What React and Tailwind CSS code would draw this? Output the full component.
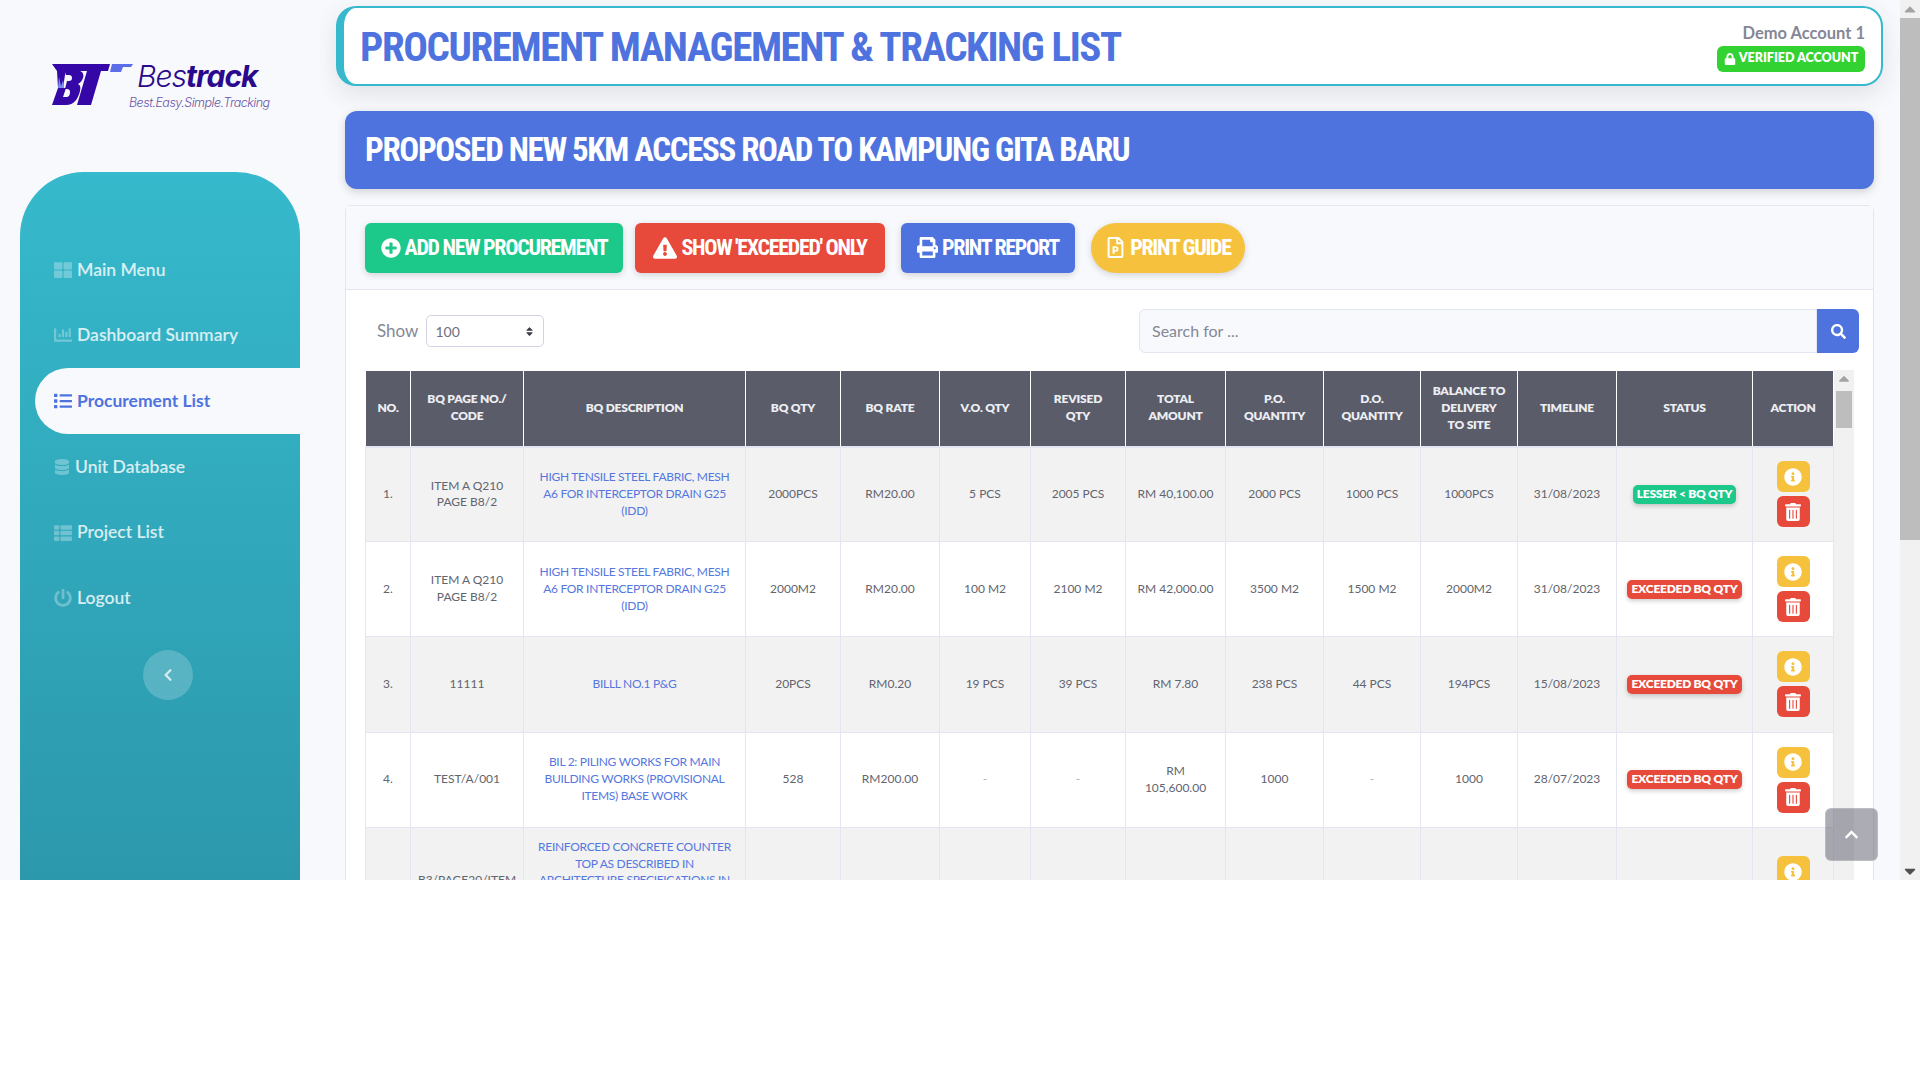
import { FaThLarge, FaChartBar, FaList, FaDatabase, FaThList, FaPowerOff, FaChevronLeft, FaChevronUp, FaLock, FaPlusCircle, FaExclamationTriangle, FaPrint, FaRegFilePowerpoint, FaSearch, FaInfoCircle, FaTrashAlt, FaSort, FaCaretUp, FaCaretDown } from 'react-icons/fa';

const menu = [
    { label: 'Main Menu', icon: FaThLarge },
    { label: 'Dashboard Summary', icon: FaChartBar },
    { label: 'Procurement List', icon: FaList, active: true },
    { label: 'Unit Database', icon: FaDatabase, tight: true },
    { label: 'Project List', icon: FaThList },
    { label: 'Logout', icon: FaPowerOff },
];

const columns = [
    { label: 'NO.', w: 'w-[45px]' },
    { label: 'BQ PAGE NO./\nCODE', w: 'w-[113px]' },
    { label: 'BQ DESCRIPTION', w: 'w-[222px]' },
    { label: 'BQ QTY', w: 'w-[95px]' },
    { label: 'BQ RATE', w: 'w-[99px]' },
    { label: 'V.O. QTY', w: 'w-[91px]' },
    { label: 'REVISED\nQTY', w: 'w-[95px]' },
    { label: 'TOTAL\nAMOUNT', w: 'w-[100px]' },
    { label: 'P.O.\nQUANTITY', w: 'w-[98px]' },
    { label: 'D.O.\nQUANTITY', w: 'w-[97px]' },
    { label: 'BALANCE TO\nDELIVERY\nTO SITE', w: 'w-[97px]' },
    { label: 'TIMELINE', w: 'w-[99px]' },
    { label: 'STATUS', w: 'w-[136px]' },
    { label: 'ACTION', w: 'w-[81px]' },
];

const rows = [
    ['1.', 'ITEM A Q210\nPAGE B8/2', 'HIGH TENSILE STEEL FABRIC, MESH\nA6 FOR INTERCEPTOR DRAIN G25\n(IDD)', '2000PCS', 'RM20.00', '5 PCS', '2005 PCS', 'RM 40,100.00', '2000 PCS', '1000 PCS', '1000PCS', '31/08/2023', 'LESSER < BQ QTY'],
    ['2.', 'ITEM A Q210\nPAGE B8/2', 'HIGH TENSILE STEEL FABRIC, MESH\nA6 FOR INTERCEPTOR DRAIN G25\n(IDD)', '2000M2', 'RM20.00', '100 M2', '2100 M2', 'RM 42,000.00', '3500 M2', '1500 M2', '2000M2', '31/08/2023', 'EXCEEDED BQ QTY'],
    ['3.', '11111', 'BILLL NO.1 P&G', '20PCS', 'RM0.20', '19 PCS', '39 PCS', 'RM 7.80', '238 PCS', '44 PCS', '194PCS', '15/08/2023', 'EXCEEDED BQ QTY'],
    ['4.', 'TEST/A/001', 'BIL 2: PILING WORKS FOR MAIN\nBUILDING WORKS (PROVISIONAL\nITEMS) BASE WORK', '528', 'RM200.00', '-', '-', 'RM\n105,600.00', '1000', '-', '1000', '28/07/2023', 'EXCEEDED BQ QTY'],
    ['', 'B3/PAGE20/ITEM\n4', 'REINFORCED CONCRETE COUNTER\nTOP AS DESCRIBED IN\nARCHITECTURE SPECIFICATIONS IN\nDRAWINGS AND AS INSTRUCTED\nBY THE SUPERINTENDING\nOFFICER', '', '', '', '', 'RM\n', '', '', '', '', ''],
];

const condensed = "font-['Roboto','Liberation_Sans',sans-serif] [font-stretch:75%]";

const Logo = () => (
    <div className="flex items-start pl-[32px] pt-[64px] h-[172px]">
        <svg width="81" height="41" viewBox="0 0 81 41" className="shrink-0">
            <path fill="#3407a6" d="M0 0H58L56 7H49L39 41H25L35 7H28C31 8 32 11 31 14C30 17 28 19 26 20C28 21 29 23 28 27C26 35 22 41 14 41H0L6 24H14L11 33H14C17 33 18 31 18 28C18 26 17 25 15 25H13L15 17H17C19 17 20 16 20 14C20 12 19 11 17 11H14L13 7H5Z" />
            <path fill="#3407a6" d="M5 7H14L13 11L11 24H6Z" />
            <path fill="#5b6ee8" d="M60 0H81L79 3H71L69 8H58Z" />
            <path fill="#7d8cf0" d="M6 24L7 13L9 22L11 16L12 24Z" />
        </svg>
        <div className="ml-[5px] -mt-[4px] font-['Inter',sans-serif] italic text-[#2a0a8c]">
            <div className="text-[30px] leading-[32px] tracking-[-1px] -ml-[1px] font-light">Bes<span className="font-bold">track</span></div>
            <div className="text-[12.5px] leading-[14px] mt-[4px] -ml-[9px] tracking-[-0.5px] font-light text-[#6a55a8] whitespace-nowrap">Best.Easy.Simple.Tracking</div>
        </div>
    </div>
);

const Sidebar = () => (
    <aside className="w-[320px] shrink-0 px-5">
        <Logo />
        <nav className="h-[708px] rounded-t-[64px] bg-gradient-to-b from-[#36b9cc] to-[#2c98ac] pt-[65px]">
            {menu.map((item) => {
                const Icon = item.icon;
                return (
                    <div
                        key={item.label}
                        className={item.active
                            ? 'ml-[15px] h-[66px] flex items-center pl-[19px] gap-[5px] rounded-l-[33px] bg-[#f8f9fc] text-[#4e73df] font-bold'
                            : 'h-[65.6px] flex items-center pl-[34px] gap-[5px] text-white/80 font-semibold'}
                    >
                        <Icon className={item.active ? 'text-[18px]' : item.tight ? 'text-[16px] text-white/30' : 'text-[18px] text-white/30'} />
                        <span className="text-[17.5px]">{item.label}</span>
                    </div>
                );
            })}
            <div className="flex justify-center pl-[16px] mt-[19px]">
                <div className="w-[50px] h-[50px] rounded-full bg-white/20 flex items-center justify-center text-white/75">
                    <FaChevronLeft className="text-[14px]" />
                </div>
            </div>
        </nav>
    </aside>
);

const Header = () => (
    <header className="ml-[16px] mr-[17px] mt-[6px] h-[80px] flex items-center justify-between bg-white rounded-[20px] border-2 border-l-[8px] border-[#36b9cc] shadow-[0_8px_24px_rgba(58,59,69,0.12)] pl-[16px] pr-[16px]">
        <h1 className={`${condensed} text-[41px] tracking-[-1.4px] pt-[3px] font-bold text-[#4e73df] whitespace-nowrap`}>PROCUREMENT MANAGEMENT &amp; TRACKING LIST</h1>
        <div className="flex flex-col items-end">
            <span className="text-[16.5px] font-bold text-[#858796] leading-[24px]">Demo Account 1</span>
            <span className="mt-[1px] h-[26px] w-[148px] flex items-center justify-center gap-[3px] rounded-[6px] bg-[#32d232] text-white text-[12.5px] font-extrabold">
                <FaLock className="text-[12px]" />VERIFIED ACCOUNT
            </span>
        </div>
    </header>
);

const ActionButton = ({ color, rounded, icon: Icon, children, width, iconSize }) => (
    <button className={`${width} ${color} ${rounded} ${condensed} h-[50px] flex items-center justify-center gap-[4px] text-white text-[22px] tracking-[-1.3px] font-bold whitespace-nowrap shadow-[0_2px_6px_rgba(58,59,69,0.2)]`}>
        <Icon className={iconSize} />{children}
    </button>
);

const Badge = ({ text }) => {
    const lesser = text.startsWith('LESSER');
    return (
        <span className={`${lesser ? 'bg-[#1cc88a]' : 'bg-[#e74a3b]'} inline-block rounded-[5px] px-[4px] py-[1px] text-white text-[12px] tracking-[-0.25px] font-extrabold whitespace-nowrap shadow-[0_2px_4px_rgba(58,59,69,0.25)]`}>
            {text}
        </span>
    );
};

const Row = ({ row, index }) => (
    <tr className={`${index % 2 === 0 ? 'bg-[#f2f2f2]' : 'bg-white'} ${index === 4 ? 'h-[124px]' : 'h-[95.2px]'}`}>
        {row.map((cell, i) => {
            const muted = cell === '-';
            if (i === 12) {
                return <td key={i} className="border border-[#e3e6f0] text-center align-middle">{cell && <Badge text={cell} />}</td>;
            }
            return (
                <td key={i} className={`border border-[#e3e6f0] px-[2px] text-center align-middle whitespace-pre-line ${i === 2 ? 'text-[#5577e0] tracking-[-0.3px]' : ''} ${muted ? 'text-[#b0b1b8]' : ''}`}>
                    {cell}
                </td>
            );
        })}
        <td className="border border-[#e3e6f0] align-middle">
            <div className="flex flex-col items-center gap-[4px]">
                <span className="w-[33px] h-[31px] rounded-[6px] bg-[#f6c23e] flex items-center justify-center text-white"><FaInfoCircle className="text-[18px]" /></span>
                <span className="w-[33px] h-[31px] rounded-[6px] bg-[#e74a3b] flex items-center justify-center text-white"><FaTrashAlt className="text-[18px]" /></span>
            </div>
        </td>
    </tr>
);

const MiniScrollbar = () => (
    <div className="w-[20px] bg-[#f1f1f1] shrink-0 flex flex-col items-center">
        <FaCaretUp className="h-[17px] text-[#a3a3a3] text-[12px] shrink-0" />
        <div className="mt-[4px] h-[37px] w-full px-[2px]">
            <div className="h-full bg-[#bdbdbd]" />
        </div>
    </div>
);

const DataTable = () => (
    <div className="flex ml-[19px] mr-[19px] h-[600px] overflow-hidden">
        <table className="table-fixed w-[1468px] shrink-0 border-collapse self-start text-[12px] leading-[16.8px] text-[#62646f]">
            <thead>
                <tr className="h-[76px] bg-[#5a5c69] text-[#eceef3]">
                    {columns.map((c) => (
                        <th key={c.label} className={`${c.w} border border-white border-b-[#e3e6f0] border-b-2 px-[2px] text-center font-extrabold tracking-[-0.2px] whitespace-pre-line`}>{c.label}</th>
                    ))}
                </tr>
            </thead>
            <tbody>
                {rows.map((row, i) => <Row key={i} row={row} index={i} />)}
            </tbody>
        </table>
        <MiniScrollbar />
    </div>
);

const Card = () => (
    <section className="ml-[25px] mr-[26px] mt-[16px] bg-white rounded-t-[6px] border border-[#e3e6f0]">
        <div className="h-[84px] bg-[#f8f9fc] border-b border-[#e3e6f0] flex items-center pl-[19px]">
            <ActionButton width="w-[258px]" color="bg-[#1cc88a]" rounded="rounded-[6px]" icon={FaPlusCircle} iconSize="text-[20px]">ADD NEW PROCUREMENT</ActionButton>
            <ActionButton width="w-[250px] ml-[12px]" color="bg-[#e74a3b]" rounded="rounded-[6px]" icon={FaExclamationTriangle} iconSize="text-[24px]">SHOW 'EXCEEDED' ONLY</ActionButton>
            <ActionButton width="w-[174px] ml-[16px]" color="bg-[#4e73df]" rounded="rounded-[6px]" icon={FaPrint} iconSize="text-[21px]">PRINT REPORT</ActionButton>
            <ActionButton width="w-[154px] ml-[16px]" color="bg-[#f6c23e]" rounded="rounded-[25px]" icon={FaRegFilePowerpoint} iconSize="text-[21px]">PRINT GUIDE</ActionButton>
        </div>
        <div className="flex items-center justify-between h-[80px] pt-[2px] pl-[31px] pr-[14px]">
            <div className="flex items-center gap-[8px] text-[17px] text-[#858796]">
                <span>Show</span>
                <div className="w-[118px] h-[32px] border border-[#d1d3e2] rounded-[5px] bg-white flex items-center justify-between pl-[8px] pr-[8px] text-[#6e707e] text-[14px]">
                    100
                    <FaSort className="text-[11px] text-[#3a3b45]" />
                </div>
            </div>
            <div className="flex w-[720px] h-[44px]">
                <div className="flex-1 bg-[#f8f9fc] border border-[#e3e6f0] rounded-l-[6px] flex items-center pl-[12px] text-[16px] text-[#858796]">Search for ...</div>
                <div className="w-[42px] bg-[#4e73df] rounded-r-[6px] flex items-center justify-center text-white"><FaSearch className="text-[15px]" /></div>
            </div>
        </div>
        <DataTable />
    </section>
);

export default function App() {
    return (
        <div className="relative w-[1920px] h-[1080px] bg-white overflow-hidden font-['Lato','Noto_Sans',sans-serif]">
            <div className="flex h-[880px] bg-[#f8f9fc] overflow-hidden">
                <Sidebar />
                <main className="flex-1 min-w-0 overflow-hidden bg-[#f8f9fc]">
                    <Header />
                    <div className={`${condensed} ml-[25px] mr-[26px] mt-[25px] h-[78px] rounded-[12px] bg-[#4e73df] flex items-center pl-[20px] text-white text-[33px] tracking-[-1.35px] font-bold shadow-[0_3px_8px_rgba(58,59,69,0.2)]`}>
                        PROPOSED NEW 5KM ACCESS ROAD TO KAMPUNG GITA BARU
                    </div>
                    <Card />
                </main>
                <div className="w-[20px] shrink-0 bg-[#f1f1f1] flex flex-col items-center">
                    <FaCaretUp className="h-[18px] text-[#a3a3a3] text-[12px] shrink-0" />
                    <div className="h-[522px] w-full bg-[#bdbdbd] shrink-0" />
                    <div className="flex-1" />
                    <FaCaretDown className="h-[18px] text-[#505050] text-[12px] shrink-0" />
                </div>
            </div>
            <div className="absolute left-[1825px] top-[808px] w-[53px] h-[53px] rounded-[6px] bg-[#5a5c69]/50 border border-white/20 flex items-center justify-center text-white">
                <FaChevronUp className="text-[15px]" />
            </div>
        </div>
    );
}
